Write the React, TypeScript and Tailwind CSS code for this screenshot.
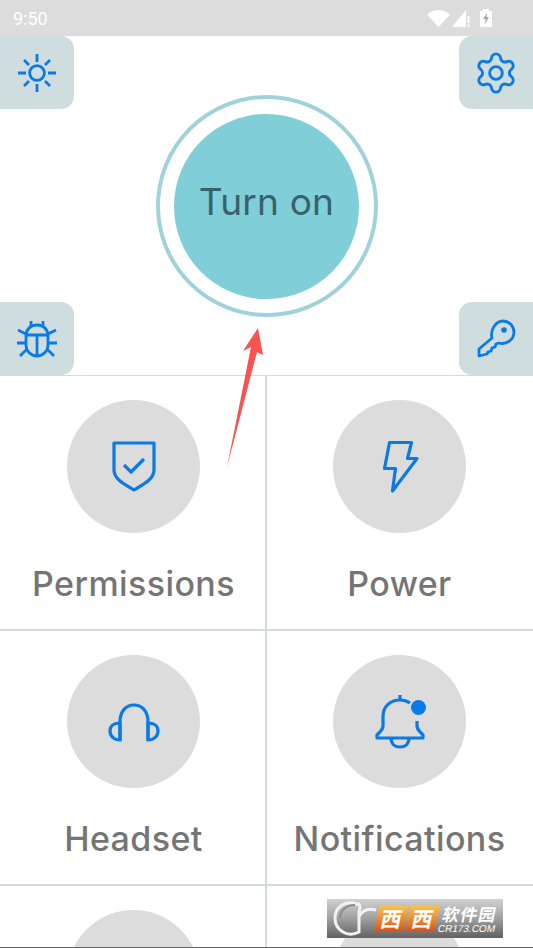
const iconClass = 'fill-none stroke-[#0a7ae6] stroke-[2.8]';

const SunIcon = () => (
  <svg width="40" height="40" viewBox="0 0 40 40" className={iconClass}>
    <circle cx="20" cy="20" r="7.400" />
    <path d="M20 1v8M20 31v8M1 20h8M31 20h8M7 7l5 5M28 28l5 5M33 7l-5 5M12 28l-5 5" />
  </svg>
);

const GearIcon = () => (
  <svg width="46" height="46" viewBox="0 0 24 24" className="fill-none stroke-[#0a7ae6] stroke-[1.5]" strokeLinejoin="round">
    <path d="M9.671 4.136a2.34 2.34 0 0 1 4.659 0 2.34 2.34 0 0 0 3.319 1.915 2.34 2.34 0 0 1 2.33 4.033 2.34 2.34 0 0 0 0 3.831 2.34 2.34 0 0 1-2.33 4.033 2.34 2.34 0 0 0-3.319 1.915 2.34 2.34 0 0 1-4.659 0 2.34 2.34 0 0 0-3.32-1.915 2.34 2.34 0 0 1-2.33-4.033 2.34 2.34 0 0 0 0-3.831A2.34 2.34 0 0 1 6.35 6.051a2.34 2.34 0 0 0 3.319-1.915" />
    <circle cx="12" cy="12" r="3.300" />
  </svg>
);

const BugIcon = () => (
  <svg width="40" height="38" viewBox="0 0 40 38" className={iconClass}>
    <path d="M9 16c0-7 5-11 11-11s11 4 11 11v9c0 6-5 11-11 11S9 31 9 25z" />
    <path d="M9 15h22M20 15v21M14 1v5M26 1v5M1 10l8 4M39 10l-8 4M0 23h9M40 23h-9M3 36l7-7M37 36l-7-7" />
  </svg>
);

const KeyIcon = () => (
  <svg width="40" height="40" viewBox="0 0 40 40" className={iconClass} strokeLinejoin="round">
    <path d="M16 19c-2-7 3-17 11-17 6 0 11 5 11 11 0 8-8 13-15 11l-3 1-1 3-3 1-1 3-3 1-1 2-8 2 0-7z" />
    <circle cx="28" cy="11" r="2.800" className="fill-[#0a7ae6] stroke-none" />
  </svg>
);

const ShieldIcon = () => (
  <svg width="46" height="54" viewBox="0 0 46 54" className="fill-none stroke-[#0a7ae6] stroke-[3.2]" strokeLinejoin="round">
    <path d="M3 3h40v27c0 9-10 14-20 20C13 44 3 39 3 30z" />
    <path d="M13 25l7 7 13-13" />
  </svg>
);

const BoltIcon = () => (
  <svg width="38" height="54" viewBox="0 0 38 54" className="fill-none stroke-[#0a7ae6] stroke-[3.2]" strokeLinejoin="round">
    <path d="M8.500 2.500h22l-4 16H36L11.500 51l3-22.500h-11z" />
  </svg>
);

const HeadsetIcon = () => (
  <svg width="54" height="40" viewBox="0 0 54 40" className="fill-none stroke-[#0a7ae6] stroke-[3.2]">
    <path d="M13 38V20C13 9 19 3 27 3s14 6 14 17v18" />
    <path d="M13 21c-6 0-10 3-10 8s4 9 10 9zM41 21c6 0 10 3 10 8s-4 9-10 9z" />
  </svg>
);

const BellIcon = () => (
  <svg width="50" height="56" viewBox="0 0 50 56" className="fill-none stroke-[#0a7ae6] stroke-[3.2]" strokeLinejoin="round">
    <path d="M25 1v5M35 9c-3-2-6-3-10-3C15 6 8 13 8 22v10c0 3-2 5-6 9v3h46v-3c-4-4-6-6-6-9v-5" />
    <path d="M16 44c0 6 4 9 9 9s9-3 9-9" />
  </svg>
);

const StatusIcons = () => (
  <div className="flex items-center">
    <svg width="23" height="17" viewBox="0 0 23 17"><path d="M0 4.500c7-6 16-6 23 0L11.500 17z" className="fill-white" /></svg>
    <svg width="19" height="18" viewBox="0 0 19 18" className="ml-[2px]">
      <path d="M14 1v17H0z" className="fill-white" />
      <path d="M15.500 7h2v7h-2zM15.500 15.500h2V18h-2z" className="fill-white" />
    </svg>
    <svg width="12" height="18" viewBox="0 0 12 18" className="ml-[9px]">
      <path d="M3 2V0h6v2h3v16H0V2z" className="fill-white" />
      <path d="M7 4 3 10h2.500L5 15l4-7H6.500z" className="fill-[#a8a8a8]" />
    </svg>
  </div>
);

const Tile = ({ side, children }: { side: 'left' | 'right'; children: React.ReactNode }) => (
  <div
    className={`w-[74px] h-[73px] bg-[#cfdddf] flex items-center justify-center ${
      side === 'left' ? 'rounded-r-[13px]' : 'rounded-l-[13px]'
    }`}
  >
    {children}
  </div>
);

const Cell = ({ label, icon, right }: { label: string; icon?: React.ReactNode; right?: boolean }) => (
  <div className={`flex flex-col items-center pt-[24px] border-b-[2px] border-[#d0dcdd] ${right ? 'pr-[1px]' : 'pl-[2px] border-r-[2px]'}`}>
    <div className="w-[133px] h-[133px] shrink-0 rounded-full bg-[#dcdcdc] flex items-center justify-center">{icon}</div>
    <span className="mt-[24px] text-[34px] leading-[54px] font-medium text-[#757575] font-['Inter',sans-serif] tracking-[0.4px] whitespace-nowrap">{label}</span>
  </div>
);

const CnBox = () => (
  <span className="w-[29px] h-[25px] -skew-x-12 bg-gradient-to-b from-[#f7c34c] to-[#d9541a] text-white text-[21px] leading-[24px] text-center font-bold font-['Noto_Sans_CJK_SC',sans-serif]">
    西
  </span>
);

const Watermark = () => (
  <div className="absolute left-[327px] top-[899px] w-[176px] h-[39px] bg-gradient-to-b from-[#d2d2d2] via-[#a0a0a0] to-[#626262] flex items-center pl-[6px] overflow-hidden">
    <svg width="44" height="37" viewBox="0 0 44 37" className="shrink-0 fill-none stroke-[#f2f2f2] stroke-[3]">
      <path d="M26 5C14-1 2 6 2 18s12 20 24 14" />
      <path d="M7 18C7 10 14 5 22 5" className="stroke-[#8a8a8a] stroke-[2]" />
      <path d="M25 3c3 2 2 6 1 9v21M26 17c3-7 9-9 17-7" />
    </svg>
    <div className="flex gap-[2px]">
      <CnBox />
      <CnBox />
    </div>
    <div className="ml-[3px] flex flex-col items-center text-white -skew-x-12">
      <span className="text-[17px] leading-[19px] tracking-[1px] font-bold font-['Noto_Sans_CJK_SC',sans-serif]">软件园</span>
      <span className="text-[10px] leading-[11px] font-['Liberation_Sans',sans-serif]">CR173.COM</span>
    </div>
  </div>
);

const App = () => (
  <div className="relative w-[533px] h-[948px] overflow-hidden bg-white border-b border-[#666]">
    <div className="h-[36px] bg-[#dcdcdc] flex items-center justify-between pl-[13px] pr-[41px]">
      <span className="text-[18px] text-white font-['Roboto',sans-serif]">9:50</span>
      <StatusIcons />
    </div>

    <div className="h-[339px] grid grid-cols-[74px_1fr_74px] grid-rows-[73px_1fr_73px]">
      <Tile side="left"><SunIcon /></Tile>
      <div className="row-span-3 flex items-center justify-center pt-[1px]">
        <div className="w-[222px] h-[222px] rounded-full border-[4px] border-[#9fd3d9] flex items-center justify-center">
          <div className="w-[185px] h-[185px] rounded-full bg-[#80ced8] flex items-center justify-center text-[37px] tracking-[0.2px] text-[#37626c] font-['Inter',sans-serif] pb-[8px]">
            Turn on
          </div>
        </div>
      </div>
      <Tile side="right"><GearIcon /></Tile>
      <div className="col-start-1 row-start-3"><Tile side="left"><BugIcon /></Tile></div>
      <div className="col-start-3 row-start-3"><Tile side="right"><KeyIcon /></Tile></div>
    </div>

    <div className="border-t-[1px] border-[#d0dcdd] grid grid-cols-[267px_266px] auto-rows-[255px]">
      <Cell label="Permissions" icon={<ShieldIcon />} />
      <Cell label="Power" icon={<BoltIcon />} right />
      <Cell label="Headset" icon={<HeadsetIcon />} />
      <Cell
        label="Notifications"
        right
        icon={
          <div className="relative">
            <BellIcon />
            <div className="absolute top-[6px] right-[-1px] w-[15px] h-[15px] rounded-full bg-[#0a7ae6]" />
          </div>
        }
      />
      <Cell label="" />
      <Cell label="" right />
    </div>

    <svg width="533" height="948" className="absolute left-0 top-0 pointer-events-none">
      <path d="M258 328 263 355 257 352 227 467 251 347 243 351z" className="fill-[#f65352]" />
    </svg>

    <Watermark />
  </div>
);

export default App;
